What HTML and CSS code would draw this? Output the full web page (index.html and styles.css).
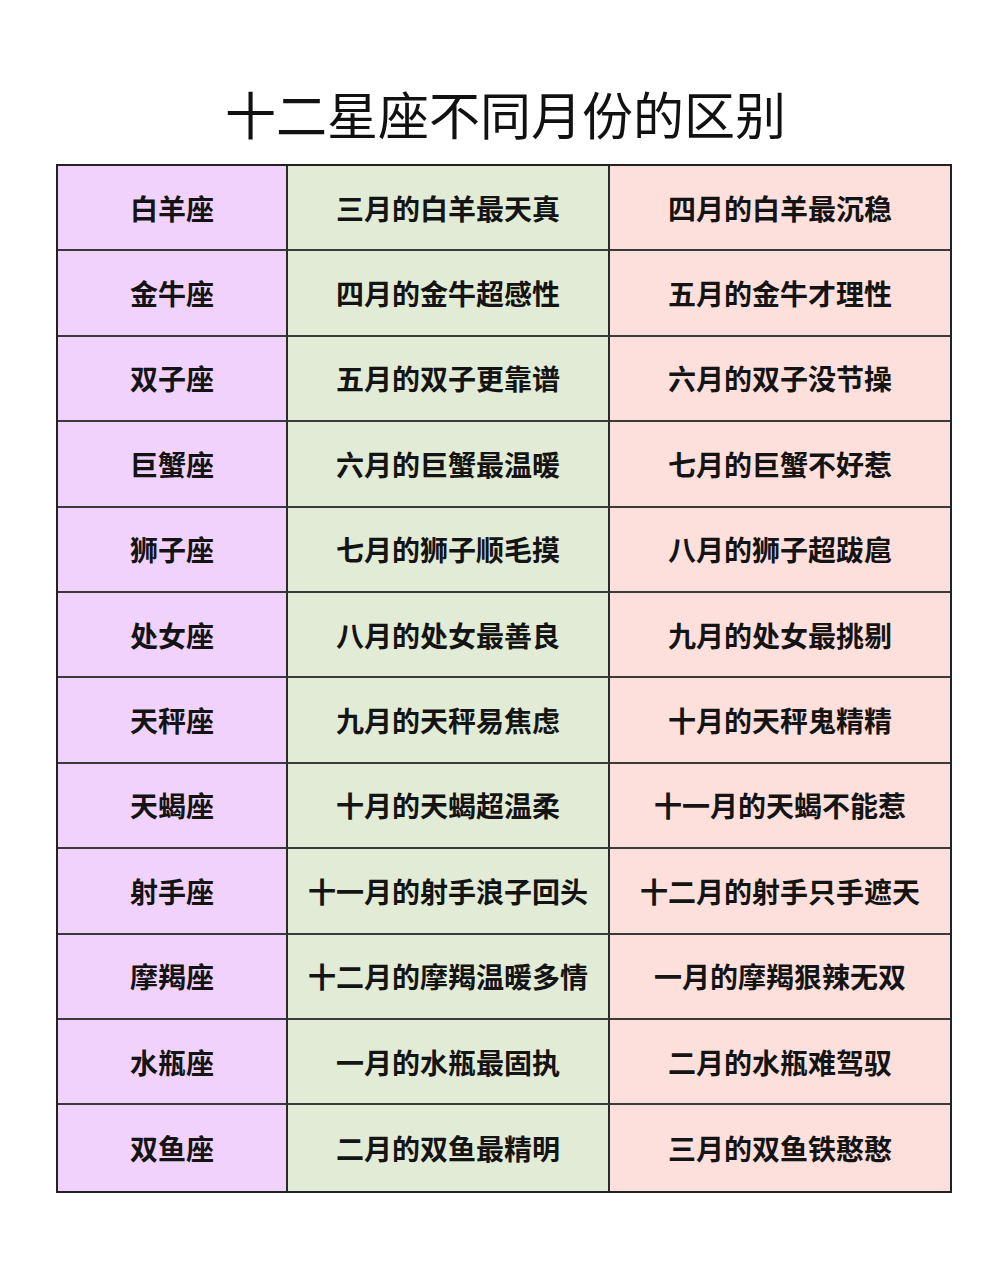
FILE: index.html
```html
<!DOCTYPE html>
<html lang="zh">
<head>
<meta charset="utf-8">
<link rel="stylesheet" href="styles.css">
</head>
<body>
<div class="page">
  <h1 class="title">十二星座不同月份的区别</h1>
  <div class="table">
    <div class="c a">白羊座</div><div class="c b">三月的白羊最天真</div><div class="c d">四月的白羊最沉稳</div>
    <div class="c a">金牛座</div><div class="c b">四月的金牛超感性</div><div class="c d">五月的金牛才理性</div>
    <div class="c a">双子座</div><div class="c b">五月的双子更靠谱</div><div class="c d">六月的双子没节操</div>
    <div class="c a">巨蟹座</div><div class="c b">六月的巨蟹最温暖</div><div class="c d">七月的巨蟹不好惹</div>
    <div class="c a">狮子座</div><div class="c b">七月的狮子顺毛摸</div><div class="c d">八月的狮子超跋扈</div>
    <div class="c a">处女座</div><div class="c b">八月的处女最善良</div><div class="c d">九月的处女最挑剔</div>
    <div class="c a">天秤座</div><div class="c b">九月的天秤易焦虑</div><div class="c d">十月的天秤鬼精精</div>
    <div class="c a">天蝎座</div><div class="c b">十月的天蝎超温柔</div><div class="c d">十一月的天蝎不能惹</div>
    <div class="c a">射手座</div><div class="c b">十一月的射手浪子回头</div><div class="c d">十二月的射手只手遮天</div>
    <div class="c a">摩羯座</div><div class="c b">十二月的摩羯温暖多情</div><div class="c d">一月的摩羯狠辣无双</div>
    <div class="c a">水瓶座</div><div class="c b">一月的水瓶最固执</div><div class="c d">二月的水瓶难驾驭</div>
    <div class="c a last">双鱼座</div><div class="c b last">二月的双鱼最精明</div><div class="c d last">三月的双鱼铁憨憨</div>
  </div>
</div>
</body>
</html>
```
FILE: styles.css
```css
html, body {
  margin: 0;
  padding: 0;
  background: #ffffff;
}
.page {
  width: 1003px;
  height: 1280px;
  padding-top: 83px;
  box-sizing: border-box;
  font-family: "Noto Sans CJK SC", "Noto Sans", sans-serif;
}
.title {
  margin: 0 0 0 8px;
  text-align: center;
  font-size: 51px;
  font-weight: 400;
  line-height: 61px;
  color: #111;
}
.table {
  margin: 20px 0 0 56px;
  width: 896px;
  display: grid;
  grid-template-columns: 230px 322px 340px;
  grid-auto-rows: 85.4px;
  border: 2px solid #222;
  box-sizing: border-box;
}
.c {
  display: flex;
  align-items: center;
  justify-content: center;
  font-size: 28px;
  font-weight: 700;
  color: #141414;
  border-bottom: 2px solid #3a3a3a;
  box-sizing: border-box;
}
.c.last {
  border-bottom: none;
}
.a {
  background: #f1d2fc;
  border-right: 2px solid #2a2a2a;
}
.b {
  background: #e1ebd5;
  border-right: 2px solid #2a2a2a;
}
.d {
  background: #fde0dc;
}
```
